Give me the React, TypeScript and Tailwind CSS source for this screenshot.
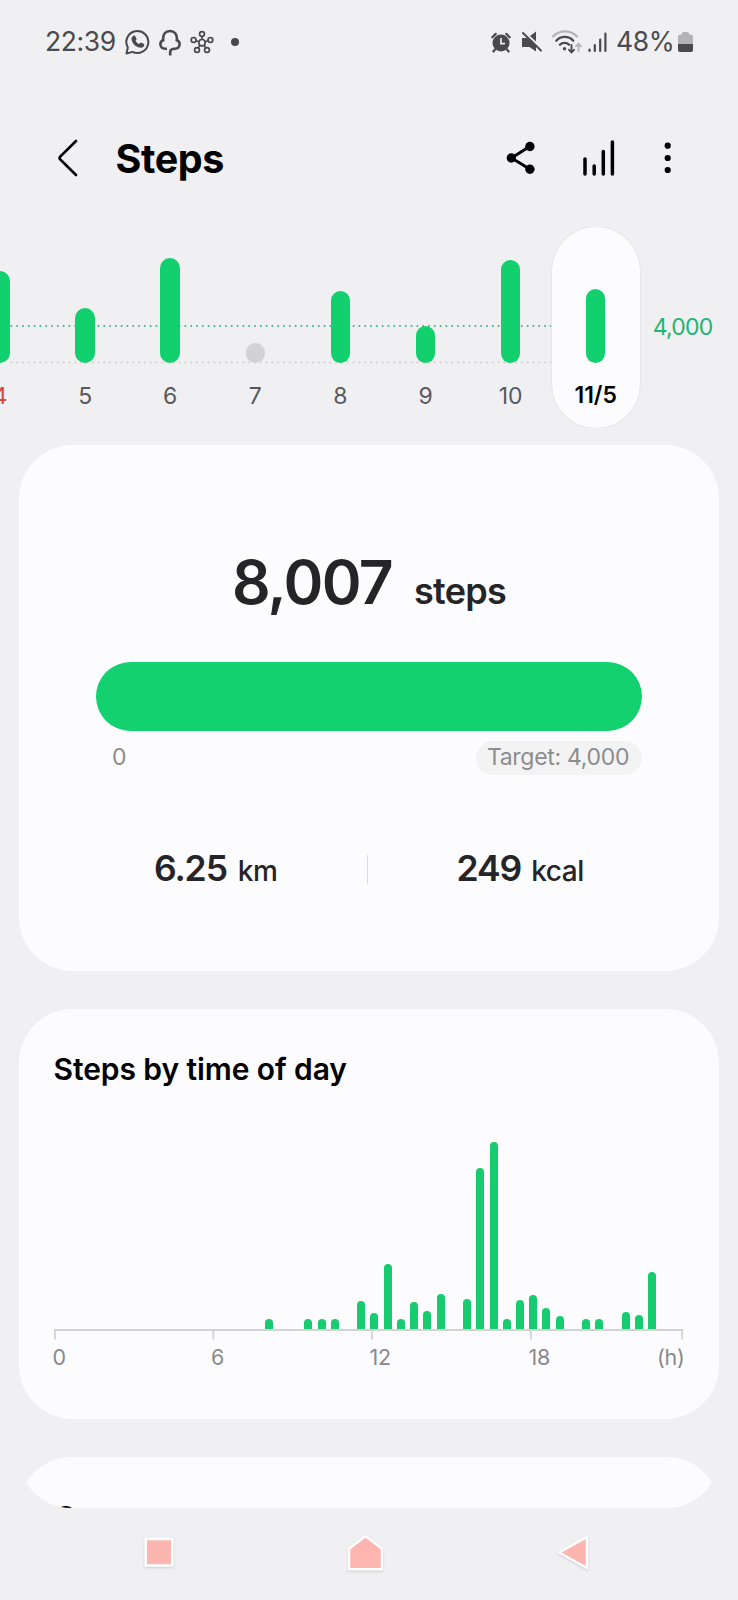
import clsx from 'clsx';

type Day = { label: string; height: number; sunday?: boolean; empty?: boolean; selected?: boolean };

const days: Day[] = [
   { label: '4', height: 91.5, sunday: true },
   { label: '5', height: 55 },
   { label: '6', height: 105 },
   { label: '7', height: 20, empty: true },
   { label: '8', height: 71.5 },
   { label: '9', height: 36.5 },
   { label: '10', height: 102.5 },
   { label: '11/5', height: 73.5, selected: true },
];

// one value per half hour, starting at midnight
const halfHours = [
   0, 0, 0, 0, 0, 0, 0, 0, 0, 0, 0, 0, 0, 0, 0, 0, 10, 0, 0, 10, 10, 10, 0, 28, 16, 65, 10, 27, 18,
   35, 0, 29.5, 160.5, 186.5, 10, 29, 34, 20.5, 13, 0, 10, 10, 0, 17, 14, 56.5, 0,
];

function StatusBar() {
   return (
      <div className="flex h-[84px] items-center justify-between pl-[45px] pr-[45px] text-[26.5px] text-[#4a4a4c]">
         <div className="flex items-center">
            <span className="w-[80px] tracking-[-0.4px]">22:39</span>
            <svg width="26" height="26" viewBox="0 0 26 26" fill="none">
               <path
                  d="M1.500 24.500L2.800 18.500A11 11 0 1 1 7.500 22.900Z"
                  stroke="currentColor"
                  strokeWidth="2"
                  strokeLinejoin="round"
               />
               <path
                  d="M8.2 7c.7-.6 1.7-.5 2.2.4l1 1.9c.3.6.2 1.2-.3 1.7l-.6.7c.9 1.6 2 2.600 3.600 3.300l.8-.9c.4-.5 1-.6 1.600-.3l2 1c.8.4.9 1.100.6 1.900-.8 1.700-2.500 2.300-4.500 1.900-4.100-.9-7.400-4.200-8-8.100-.2-1.500.4-2.700 1.600-3.500Z"
                  fill="currentColor"
               />
            </svg>
            <svg className="ml-[8px]" width="22" height="27" viewBox="0 0 22 27" fill="none">
               <path
                  d="M8 19.700H6C.8 19.700-.2 13 4.200 11.200C3.500 5 6.700 2 11 2S18.500 5 17.800 11.200C22.200 13 21.200 19.700 16 19.700C12.700 19.700 11.200 20.700 11.200 23V26.500"
                  stroke="currentColor"
                  strokeWidth="2.600"
               />
            </svg>
            <svg className="ml-[9px]" width="24" height="24" viewBox="0 0 24 24" fill="none" stroke="currentColor" strokeWidth="1.700">
               <path d="M12 6.500v3M8.500 11.500l-2.700-.8M15.500 11.500l2.700-.8M10 15.200l-1.700 2.700M14 15.200l1.700 2.700" />
               <circle cx="12" cy="12.700" r="3.200" />
               <circle cx="12" cy="4" r="2.400" />
               <circle cx="3.600" cy="9.900" r="2.400" />
               <circle cx="20.400" cy="9.900" r="2.400" />
               <circle cx="7" cy="20" r="2.400" />
               <circle cx="17" cy="20" r="2.400" />
            </svg>
            <span className="ml-[17px] size-2 rounded-full bg-[#4a4a4c]" />
         </div>

         <div className="flex items-center">
            <svg width="20" height="21" viewBox="0 0 20 21">
               <circle cx="10" cy="11" r="8.500" fill="currentColor" />
               <path
                  d="M1.300 5.300l3.400-3.400M18.700 5.300l-3.400-3.400M4 17.500l-1.600 2M16 17.500l1.600 2"
                  stroke="currentColor"
                  strokeWidth="2.200"
                  strokeLinecap="round"
               />
               <path d="M10 6v5.600h4" fill="none" stroke="#f0f0f2" strokeWidth="1.700" />
            </svg>
            <svg className="ml-[10px]" width="22" height="22" viewBox="0 0 22 22">
               <path d="M1 7h5.500l8.500 8.300V20.500l-6.500-4.500H1Z" fill="currentColor" />
               <path d="M9 5l6-4.500v10Z" fill="currentColor" />
               <path d="M2 2l18 17.500" stroke="currentColor" strokeWidth="2" strokeLinecap="round" />
            </svg>
            <svg className="ml-[8px]" width="31" height="24" viewBox="0 0 31 24" fill="none" strokeWidth="2.300" strokeLinecap="round">
               <path d="M2 6.500a16.500 16.500 0 0 1 24 0" stroke="#b5b5b7" />
               <path d="M5.300 10.700a11.500 11.500 0 0 1 17 0M9 14.700a6.500 6.500 0 0 1 9 0" stroke="currentColor" />
               <circle cx="13.500" cy="18.700" r="1.700" fill="currentColor" />
               <path d="M20.500 15v7M18 19.800l2.500 2.600 2.500-2.600" stroke="currentColor" strokeWidth="1.900" />
               <path d="M27.500 21v-7M25 16.300l2.500-2.600 2.500 2.600" stroke="#b5b5b7" strokeWidth="1.900" />
            </svg>
            <svg className="ml-[6px]" width="19" height="22" viewBox="0 0 19 22" stroke="currentColor" strokeWidth="2.200" strokeLinecap="round">
               <path d="M1.500 18.500V20M6.800 14V20M12.200 8.500V20M17.400 2.500V20" />
            </svg>
            <span className="ml-[9px] w-[62px] tracking-[-0.4px]">48%</span>
            <svg width="15" height="22" viewBox="0 0 15 22">
               <path d="M4 3.500V2.500Q4 1 5.500 1h4Q11 1 11 2.500V3.500h1.500Q15 3.500 15 6v7H0V6Q0 3.500 2.500 3.500Z" fill="#b3b3b5" />
               <path d="M0 13h15v6q0 2-2 2H2q-2 0-2-2Z" fill="currentColor" />
            </svg>
         </div>
      </div>
   );
}

function Header() {
   return (
      <header className="flex h-[143px] items-center pt-[5px] pl-[57px] pr-[65px] text-black">
         <svg width="22" height="38" viewBox="0 0 22 38" fill="none">
            <path
               d="M19 2L3.200 17.600Q2 19 3.200 20.400L19 36"
               stroke="currentColor"
               strokeWidth="2.700"
               strokeLinecap="round"
               strokeLinejoin="round"
            />
         </svg>
         <h1 className="ml-[36.500px] pt-[3px] text-[39.500px] font-bold tracking-[-0.4px]">Steps</h1>
         <div className="ml-auto flex items-center">
            <svg width="30" height="34" viewBox="0 0 30 34">
               <path d="M25 5.300L6.500 17L25 28.300" fill="none" stroke="currentColor" strokeWidth="3" />
               <circle cx="6.300" cy="17" r="4.700" fill="currentColor" />
               <circle cx="24.900" cy="5.500" r="4.700" fill="currentColor" />
               <circle cx="24.900" cy="28.300" r="4.700" fill="currentColor" />
            </svg>
            <svg className="ml-[47px]" width="34" height="38" viewBox="0 0 34 38" stroke="currentColor" strokeWidth="3.500" strokeLinecap="round">
               <path d="M3 20V35M12.200 27V35M21.300 12.500V35M30.400 3V35" />
            </svg>
            <svg className="ml-[47px]" width="10" height="34" viewBox="0 0 10 34" fill="currentColor">
               <circle cx="4.700" cy="4.700" r="3.100" />
               <circle cx="4.700" cy="17" r="3.100" />
               <circle cx="4.700" cy="29" r="3.100" />
            </svg>
         </div>
      </header>
   );
}

function WeekChart() {
   return (
      <section className="relative h-[201px] overflow-hidden">
         <svg className="absolute inset-0" width="551" height="201" fill="none" strokeWidth="2" strokeLinecap="round">
            <path d="M11.400 99H551" stroke="#3fb584" strokeDasharray="0 5.800" />
            <path d="M11.400 135.500H551" stroke="#cfcfd1" strokeDasharray="0 5.800" />
         </svg>
         <div className="-ml-[42.5px] flex h-full w-[760px]">
            {days.map((day) => (
               <div key={day.label} className="relative flex w-[85.1px] shrink-0 flex-col items-center">
                  {day.selected && (
                     <div className="absolute inset-y-0 -inset-x-[1.6px] rounded-full bg-[#fcfcff] shadow-[0_0_2px_rgba(0,0,0,0.12)]" />
                  )}
                  <div className="relative flex h-[135.5px] items-end">
                     <div
                        className={clsx('w-[19.500px] rounded-full', day.empty ? 'bg-[#d2d2d4]' : 'bg-[#13d06e]')}
                        style={{ height: day.height }}
                     />
                  </div>
                  <span
                     className={clsx(
                        'relative mt-[18.900px] text-[23px] leading-[30px]',
                        day.selected ? '-top-px font-semibold tracking-[-0.1px] text-black' : 'text-[#59595b]',
                        day.sunday && 'text-[#d5453f]',
                     )}
                  >
                     {day.label}
                  </span>
               </div>
            ))}
            <span className="ml-[14.500px] mt-[84.500px] text-[23px] leading-[30px] tracking-[-0.8px] text-[#22b56d]">
               4,000
            </span>
         </div>
      </section>
   );
}

function TodayCard() {
   return (
      <section className="h-[526px] rounded-[54px] bg-[#fcfcff] px-[77px] pt-[97px] text-[#252528]">
         <div className="flex h-[80px] items-baseline justify-center font-semibold">
            <span className="text-[60.500px] leading-[80px] tracking-[-1.700px]">8,007</span>
            <span className="ml-[22px] text-[36px] tracking-[-0.700px]">steps</span>
         </div>
         <div className="mt-[40px] h-[69px] rounded-full bg-[#13d16f]" />
         <div className="mt-[10px] flex h-[34px] items-center justify-between pl-[16px] text-[23px] text-[#8c8c8e]">
            <span>0</span>
            <span className="flex h-[34px] w-[166px] items-center justify-center rounded-full bg-[#f3f3f4] pr-[2px] tracking-[-0.3px]">
               Target: 4,000
            </span>
         </div>
         <div className="mt-[76px] flex h-[40px] items-center font-semibold">
            <div className="flex w-[270.500px] items-baseline justify-center pr-[31px]">
               <span className="text-[35.500px] leading-[40px] tracking-[-1.100px]">6.25</span>
               <span className="ml-[11px] text-[28px] font-medium tracking-[-0.400px]">km</span>
            </div>
            <div className="mb-[3px] h-[29px] w-px bg-[#dcdcde]" />
            <div className="flex flex-1 items-baseline justify-center pl-[31px]">
               <span className="text-[35.500px] leading-[40px] tracking-[-1.100px]">249</span>
               <span className="ml-[10px] text-[28px] font-medium tracking-[-0.400px]">kcal</span>
            </div>
         </div>
      </section>
   );
}

function TimeOfDayCard() {
   return (
      <section className="h-[410.500px] rounded-[54px] bg-[#fcfcff] pl-[34.500px] pr-[35.500px] pt-[40px]">
         <h2 className="text-[30px] font-semibold leading-[40px] tracking-[-0.080px] text-black">Steps by time of day</h2>
         <div className="-ml-[3.300px] mt-[40px] flex h-[200px] w-[621.800px] items-end">
            {halfHours.map((height, i) => (
               <div key={i} className="flex flex-1 justify-center">
                  <div className="w-[8px] rounded-t-full bg-[#17cc6e]" style={{ height }} />
               </div>
            ))}
         </div>
         <svg className="block" width="630" height="11" fill="none" stroke="#d2d2d4" strokeWidth="1.800">
            <path d="M0 1H629.100M.9 1V10.500M159.300 1V10.500M318 1V10.500M476.800 1V10.500M628.200 1V10.500" />
         </svg>
         <div className="-ml-px -mr-px mt-[1px] flex text-[21.500px] leading-[32px] tracking-[-0.300px] text-[#89898b]">
            <span className="w-[158.500px]">0</span>
            <span className="w-[158.500px]">6</span>
            <span className="w-[159px]">12</span>
            <span>18</span>
            <span className="ml-auto">(h)</span>
         </div>
      </section>
   );
}

function NavBar() {
   return (
      <nav className="flex h-[92px] items-start pl-[141px] pt-[26px]">
         <svg width="36" height="36" viewBox="0 0 36 36" className="drop-shadow-[0_1px_1px_rgba(0,0,0,0.15)]">
            <rect x="4.700" y="5" width="26.500" height="26.500" fill="#fcb5af" stroke="#fff" strokeWidth="2.500" />
         </svg>
         <svg width="40" height="40" viewBox="0 0 40 40" className="ml-[168px] drop-shadow-[0_1px_1px_rgba(0,0,0,0.15)]">
            <path d="M20.500 2L37 14.700V35.300H4V14.700Z" fill="#fcb5af" stroke="#fff" strokeWidth="2.500" strokeLinejoin="round" />
         </svg>
         <svg width="36" height="40" viewBox="0 0 36 40" className="ml-[170px] drop-shadow-[0_1px_1px_rgba(0,0,0,0.15)]">
            <path d="M4 18.500L32 3V34Z" fill="#fcb5af" stroke="#fff" strokeWidth="2.500" strokeLinejoin="round" />
         </svg>
      </nav>
   );
}

export default function App() {
   return (
      <div className="h-[1600px] w-[738px] overflow-hidden bg-[#f0f0f2] font-['Inter',sans-serif]">
         <StatusBar />
         <Header />
         <WeekChart />
         <main className="mx-[19px] mt-[16.500px] h-[1063.500px] overflow-hidden rounded-b-[52px]">
            <TodayCard />
            <div className="mt-[38px]">
               <TimeOfDayCard />
            </div>
            {/* next card, cut off by the bottom of the scroll area */}
            <section className="mt-[38px] h-[300px] rounded-[52px] bg-[#fcfcff] pl-[35px] pt-[40px]">
               <h2 className="text-[30px] font-semibold leading-[40px] text-black">C</h2>
            </section>
         </main>
         <NavBar />
      </div>
   );
}
